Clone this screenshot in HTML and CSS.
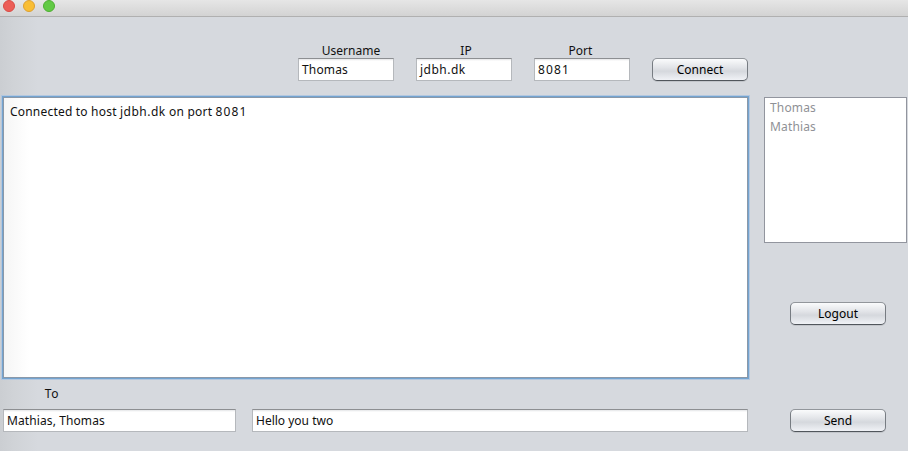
FILE: index.html
```html
<!DOCTYPE html>
<html lang="en">
<head>
<meta charset="utf-8">
<title>Chat</title>
<link rel="stylesheet" href="styles.css">
</head>
<body>
<div class="window">
  <header class="titlebar"><i class="light red"></i><i class="light yellow"></i><i class="light green"></i></header>
  <section class="connection">
    <label class="field"><span class="caption username">Username</span><span class="input name">Thomas</span></label>
    <label class="field"><span class="caption ip">IP</span><span class="input host">jdbh.dk</span></label>
    <label class="field"><span class="caption port">Port</span><span class="input digits">8081</span></label>
    <button class="button connect">Connect</button>
  </section>
  <main class="main">
    <div class="log"><span>Connected to host </span><span class="host">jdbh.dk</span><span> on port </span><span class="digits">8081</span></div>
    <aside class="side">
      <ul class="users"><li>Thomas</li><li>Mathias</li></ul>
      <button class="button">Logout</button>
    </aside>
  </main>
  <footer class="compose">
    <span class="to">To</span>
    <div class="row">
      <div class="input recipients">Mathias, Thomas</div>
      <div class="input message">Hello you two</div>
      <button class="button send">Send</button>
    </div>
  </footer>
</div>
</body>
</html>
```
FILE: styles.css
```css
* { box-sizing: border-box; }
body {
  margin: 0;
  font: 12px/16px "Noto Sans", "Lucida Grande", sans-serif;
  color: #111;
}
.window {
  width: 908px;
  height: 451px;
  overflow: hidden;
  display: flex;
  flex-direction: column;
  background: linear-gradient(90deg, #cbced2 0, #d0d3d7 14px, #d6d9de 38px, #d6d9de 100%);
}
.titlebar {
  height: 17px;
  flex: none;
  display: flex;
  gap: 8px;
  padding-left: 3px;
  background: linear-gradient(#e6e6e6, #d3d3d3);
  border-bottom: 1px solid #b0b0b0;
}
.light { width: 12px; height: 12px; border-radius: 50%; border: 1px solid; }
.red { background: #ec5e57; border-color: #d94b44; }
.yellow { background: #f9be35; border-color: #dda031; }
.green { background: #62ca45; border-color: #4eae33; }
.connection {
  height: 79px;
  flex: none;
  display: flex;
  align-items: flex-start;
  gap: 22px;
  padding: 26px 0 0 298px;
}
.field { width: 96px; display: flex; flex-direction: column; }
.caption { height: 15px; text-align: center; padding-right: 0; }
.username { padding-left: 10px; }
.ip { padding-left: 4px; }
.port { padding-right: 3px; }
.input {
  height: 23px;
  border: 1px solid #b5b8bc;
  border-top: 1px solid #8d8f92;
  background: linear-gradient(#e4e5e7 0, #fff 2px);
  padding: 3px 0 0 3px;
  white-space: nowrap;
}
.name { letter-spacing: .15px; }
.host { letter-spacing: .5px; }
.digits { letter-spacing: 1.1px; }
.button {
  width: 96px;
  height: 23px;
  padding: 0;
  font: inherit;
  color: #000;
  border: 1px solid #777c82;
  border-top-color: #92969b;
  border-bottom-color: #51565c;
  border-radius: 5px;
  background: linear-gradient(#fafbfc, #e2e4e8 40%, #d5d8dd 58%, #f0f2f6);
  box-shadow: 0 1px 0 #c2c5ca;
}
.connect { margin-top: 15px; }
.main { height: 283px; flex: none; display: flex; padding-left: 2px; }
.log {
  width: 747px;
  height: 283px;
  border: 1px solid #73a4d1;
  box-shadow: 0 0 0 1px #b3c7df, inset 0 0 0 1px #8b98a8;
  background: linear-gradient(90deg, #f5f5f5, #fff 26px);
  padding: 7px 0 0 7px;
  letter-spacing: .2px;
}
.side { margin-left: 15px; padding-top: 1px; display: flex; flex-direction: column; align-items: center; gap: 59px; }
.users {
  width: 143px;
  height: 146px;
  margin: 0;
  padding: 0 5px;
  list-style: none;
  color: #8f9196;
  border: 1px solid #92959e;
  background: #fff;
  line-height: 19px;
  letter-spacing: .15px;
}
.side .button { margin-left: 5px; }
.compose { padding: 7px 0 0 3px; }
.to { display: block; width: 98px; height: 23px; text-align: center; letter-spacing: .6px; }
.row { display: flex; }
.recipients { width: 233px; letter-spacing: .1px; }
.message { width: 496px; margin-left: 16px; }
.send { margin-left: 42px; }
```
